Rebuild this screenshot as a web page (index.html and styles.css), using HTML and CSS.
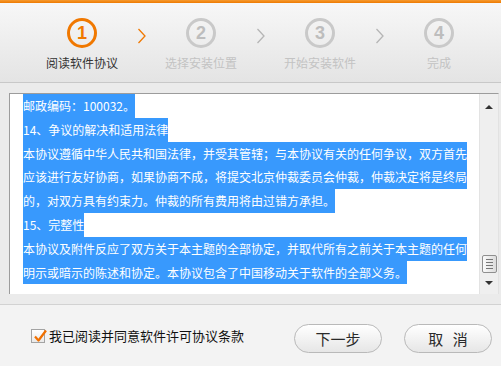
FILE: index.html
```html
<!DOCTYPE html>
<html lang="zh-CN">
<head>
  <meta charset="UTF-8" />
  <title>软件安装 - 阅读软件协议</title>
  <link rel="stylesheet" href="styles.css">
</head>
<body>
  <div class="window">
    <div class="topbar"></div>

    <div class="steps">
      <div class="step active">
        <div class="circle">1</div>
        <div class="step-label">阅读软件协议</div>
      </div>
      <div class="arrow active">
        <svg width="10" height="16" viewBox="0 0 10 16"><polyline points="1.5,1 8,8 1.5,15" /></svg>
      </div>
      <div class="step">
        <div class="circle">2</div>
        <div class="step-label">选择安装位置</div>
      </div>
      <div class="arrow">
        <svg width="10" height="16" viewBox="0 0 10 16"><polyline points="1.5,1 8,8 1.5,15" /></svg>
      </div>
      <div class="step">
        <div class="circle">3</div>
        <div class="step-label">开始安装软件</div>
      </div>
      <div class="arrow">
        <svg width="10" height="16" viewBox="0 0 10 16"><polyline points="1.5,1 8,8 1.5,15" /></svg>
      </div>
      <div class="step">
        <div class="circle">4</div>
        <div class="step-label">完成</div>
      </div>
    </div>

    <div class="main">
      <div class="textbox">
        <div class="license">
          <div class="row sel">邮政编码：100032。</div>
          <div class="row sel">14、争议的解决和适用法律</div>
          <div class="row sel full">本协议遵循中华人民共和国法律，并受其管辖；与本协议有关的任何争议，双方首先</div>
          <div class="row sel full">应该进行友好协商，如果协商不成，将提交北京仲裁委员会仲裁，仲裁决定将是终局</div>
          <div class="row sel">的，对双方具有约束力。仲裁的所有费用将由过错方承担。</div>
          <div class="row sel">15、完整性</div>
          <div class="row sel full">本协议及附件反应了双方关于本主题的全部协定，并取代所有之前关于本主题的任何</div>
          <div class="row sel">明示或暗示的陈述和协定。本协议包含了中国移动关于软件的全部义务。</div>
        </div>
        <div class="scrollbar">
          <div class="sb-arrow up"></div>
          <div class="thumb">
            <span></span><span></span><span></span><span></span>
          </div>
          <div class="sb-arrow down"></div>
        </div>
      </div>
    </div>

    <div class="footer">
      <label class="agree">
        <span class="checkbox">
          <svg width="16" height="16" viewBox="0 0 16 16"><path d="M3 8.5 L6.5 12.5 L14 2.5" /></svg>
        </span>
        我已阅读并同意软件许可协议条款
      </label>
      <div class="buttons">
        <button class="btn">下一步</button>
        <button class="btn cancel">取 消</button>
      </div>
    </div>
  </div>
</body>
</html>
```

FILE: styles.css
```css
* {
  box-sizing: border-box;
}

body {
  margin: 0;
  padding: 0;
  font-family: 'Noto Sans CJK SC', 'Noto Sans', sans-serif;
  background: #ebebeb;
  color: #222;
}

.window {
  width: 501px;
  height: 366px;
  overflow: hidden;
  display: flex;
  flex-direction: column;
  background: #ebebeb;
}

.topbar {
  height: 3px;
  background: linear-gradient(#f59a30, #ee7a00);
}

/* step header */
.steps {
  height: 80px;
  display: flex;
  padding-left: 46px;
  background: linear-gradient(#f7f7f7, #e4e4e4);
  border-bottom: 1px solid #c8c8c8;
}

.step {
  width: 72px;
  display: flex;
  flex-direction: column;
  align-items: center;
}

.circle {
  width: 30px;
  height: 30px;
  margin-top: 15px;
  border: 3px solid #c9c9c9;
  border-radius: 50%;
  color: #bdbdbd;
  font-family: 'Liberation Sans', Arial, sans-serif;
  font-weight: bold;
  font-size: 18px;
  line-height: 24px;
  text-align: center;
}

.step-label {
  margin-top: 7px;
  font-size: 12px;
  line-height: 16px;
  color: #c3c3c3;
  white-space: nowrap;
}

.step.active .circle {
  border-color: #f07800;
  color: #f07800;
}

.step.active .step-label {
  color: #333;
}

.arrow {
  width: 47px;
  display: flex;
  justify-content: center;
  padding-top: 25px;
}

.arrow polyline {
  fill: none;
  stroke: #b5b5b5;
  stroke-width: 1.3;
}

.arrow.active polyline {
  stroke: #f07800;
}

/* license text */
.main {
  padding: 10px 2px 10px 9px;
}

.textbox {
  height: 201px;
  display: flex;
  background: #fff;
  border-top: 1px solid #9c9c9c;
  border-left: 1px solid #9c9c9c;
  border-right: 1px solid #e2e2e2;
}

.license {
  flex: 1;
  padding: 0 12px 0 13px;
  overflow: hidden;
  font-size: 12px;
  line-height: 23.8px;
  color: #222;
}

.row {
  white-space: nowrap;
  width: fit-content;
}

.row.full {
  width: auto;
}

.row.sel {
  background: #3899fd;
  color: #fff;
}

.scrollbar {
  width: 19px;
  background: #efefef;
  border-left: 1px solid #e3e3e3;
  display: flex;
  flex-direction: column;
  align-items: center;
}

.sb-arrow {
  width: 0;
  height: 0;
  border-left: 4px solid transparent;
  border-right: 4px solid transparent;
}

.sb-arrow.up {
  margin-top: 11px;
  border-bottom: 4px solid #333;
}

.sb-arrow.down {
  margin-top: 8px;
  border-top: 4px solid #333;
}

.thumb {
  width: 15px;
  height: 18px;
  margin-top: 146px;
  border: 1px solid #8f8f8f;
  border-radius: 2px;
  background: linear-gradient(90deg, #fafafa, #dcdcdc);
  display: flex;
  flex-direction: column;
  justify-content: center;
  align-items: center;
  gap: 2px;
}

.thumb span {
  width: 7px;
  height: 1px;
  background: #777;
}

/* footer */
.footer {
  flex: 1;
  background: #f3f3f3;
  border-top: 1px solid #d2d2d2;
  display: flex;
  justify-content: space-between;
  align-items: flex-start;
  padding: 19px 9px 0 31px;
}

.agree {
  display: flex;
  align-items: center;
  gap: 4px;
  margin-top: 4px;
  font-size: 13px;
  line-height: 16px;
  color: #111;
}

.checkbox {
  position: relative;
  width: 14px;
  height: 14px;
  border: 1px solid #a3a3a3;
  background: linear-gradient(#ffffff, #e9e9e9);
}

.checkbox svg {
  position: absolute;
  left: 0;
  top: -2px;
}

.checkbox path {
  fill: none;
  stroke: #f07000;
  stroke-width: 2.2;
  stroke-linejoin: round;
}

.buttons {
  display: flex;
  gap: 22px;
}

.btn {
  width: 88px;
  height: 29px;
  border: 1px solid #b9b9b9;
  border-radius: 15px;
  background: linear-gradient(#ffffff, #e6e6e6);
  font-family: 'Noto Sans CJK SC', sans-serif;
  font-size: 15px;
  color: #2a2a2a;
  padding: 0;
}

.btn.cancel {
  word-spacing: 6px;
}
```
